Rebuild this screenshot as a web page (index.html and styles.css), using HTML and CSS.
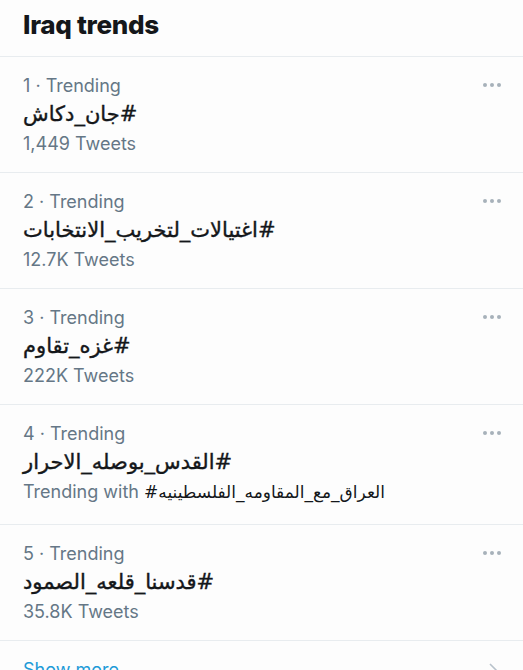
FILE: index.html
```html
<!DOCTYPE html>
<html lang="en">
<head>
    <meta charset="UTF-8">
    <title>Iraq trends</title>
    <link rel="stylesheet" href="styles.css">
</head>
<body>
    <div class="panel">
        <h2 class="panel-title">Iraq trends</h2>

        <div class="trend">
            <div class="trend-body">
                <div class="trend-meta">1 · Trending</div>
                <div class="trend-tag" dir="rtl">#جان_دكاش</div>
                <div class="trend-meta">1,449 Tweets</div>
            </div>
            <div class="dots"><span></span><span></span><span></span></div>
        </div>

        <div class="trend">
            <div class="trend-body">
                <div class="trend-meta">2 · Trending</div>
                <div class="trend-tag" dir="rtl">#اغتيالات_لتخريب_الانتخابات</div>
                <div class="trend-meta">12.7K Tweets</div>
            </div>
            <div class="dots"><span></span><span></span><span></span></div>
        </div>

        <div class="trend">
            <div class="trend-body">
                <div class="trend-meta">3 · Trending</div>
                <div class="trend-tag" dir="rtl">#غزه_تقاوم</div>
                <div class="trend-meta">222K Tweets</div>
            </div>
            <div class="dots"><span></span><span></span><span></span></div>
        </div>

        <div class="trend trend-tall">
            <div class="trend-body">
                <div class="trend-meta">4 · Trending</div>
                <div class="trend-tag" dir="rtl">#القدس_بوصله_الاحرار</div>
                <div class="trend-meta">Trending with <span class="with-tag">#العراق_مع_المقاومه_الفلسطينيه</span></div>
            </div>
            <div class="dots"><span></span><span></span><span></span></div>
        </div>

        <div class="trend">
            <div class="trend-body">
                <div class="trend-meta">5 · Trending</div>
                <div class="trend-tag" dir="rtl">#قدسنا_قلعه_الصمود</div>
                <div class="trend-meta">35.8K Tweets</div>
            </div>
            <div class="dots"><span></span><span></span><span></span></div>
        </div>

        <div class="show-more">
            <span>Show more</span>
            <svg class="chevron" width="10" height="16" viewBox="0 0 10 16">
                <path d="M2 2 L8 8 L2 14" fill="none" stroke="#b8c2cb" stroke-width="1.6"/>
            </svg>
        </div>
    </div>
</body>
</html>
```

FILE: styles.css
```css
body {
    margin: 0;
    background: #fdfdfd;
    font-family: Inter, "Noto Sans", "DejaVu Sans", sans-serif;
    color: #14171a;
    overflow: hidden;
}

.panel {
    width: 523px;
}

.panel-title {
    margin: 0;
    height: 48px;
    padding: 0 23px 8px 23px;
    display: flex;
    align-items: center;
    font-size: 26px;
    font-weight: 800;
    letter-spacing: -0.3px;
    border-bottom: 1px solid #e8ecef;
}

.trend {
    display: flex;
    justify-content: space-between;
    align-items: flex-start;
    padding: 14px 23px 14px 23px;
    height: 87px;
    border-bottom: 1px solid #e8ecef;
}

.trend-tall {
    height: 91px;
}

.trend-body {
    display: flex;
    flex-direction: column;
    align-items: flex-start;
}

.trend-meta {
    font-size: 18px;
    line-height: 29px;
    color: #657786;
}

.trend-tag {
    font-family: "DejaVu Sans", "Noto Sans", sans-serif;
    font-size: 21px;
    line-height: 29px;
    color: #14171a;
    -webkit-text-stroke: 0.4px #14171a;
}

.with-tag {
    font-family: "DejaVu Sans", sans-serif;
    font-size: 17px;
    color: #14171a;
}

.dots {
    display: flex;
    gap: 3px;
    padding-top: 12px;
    margin-right: -1px;
}

.dots span {
    width: 4px;
    height: 4px;
    border-radius: 50%;
    background: #a7b1ba;
}

.show-more {
    display: flex;
    justify-content: space-between;
    align-items: center;
    padding: 18px 23px 0 23px;
    font-size: 18px;
    color: #1d9bd8;
}

.chevron {
    margin-right: 2px;
}
```
